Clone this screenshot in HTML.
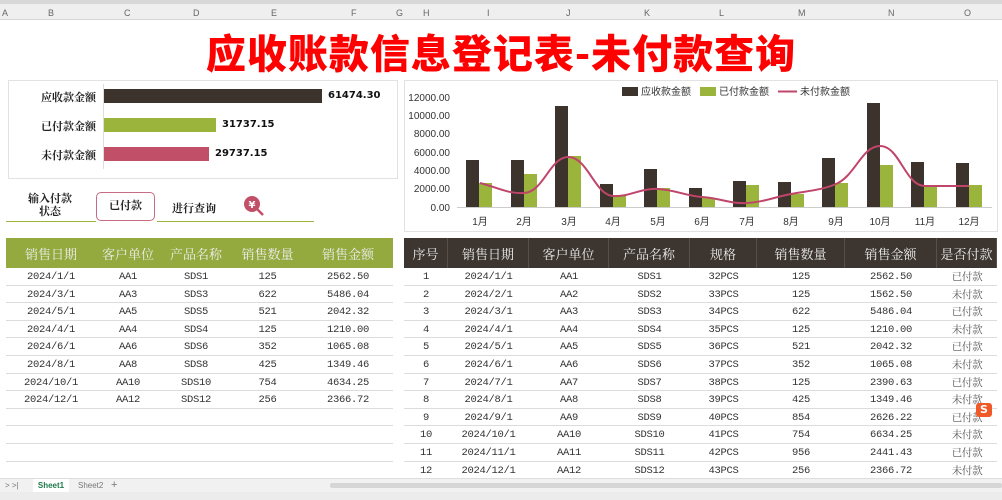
<!DOCTYPE html>
<html><head><meta charset="utf-8"><style>
*{margin:0;padding:0;box-sizing:border-box}
body{width:1002px;height:500px;overflow:hidden;background:#fff;position:relative;font-family:"Liberation Serif","Noto Serif CJK SC",serif;color:#333}
.a{position:absolute}
.colhdr{left:0;top:0;width:1002px;height:20px;background:#efefef;border-top:4px solid #d8d8d8;border-bottom:1px solid #d6d6d6;font:9px "Liberation Sans",sans-serif;color:#666}
.colhdr span{position:absolute;top:4px}
.title{left:0;width:1002px;top:26px;text-align:center;font:900 40px "Noto Sans CJK SC",sans-serif;color:#f00;letter-spacing:1px;line-height:50px}
.box{border:1px solid #e2e2e2;background:#fff}
.lbl{font-size:11px;color:#222;width:90px;text-align:right;left:6px;font-weight:bold}
.val{font:bold 10px "DejaVu Sans",sans-serif;color:#111}
table{border-collapse:separate;border-spacing:0;position:absolute;font-size:11px}
th{color:#eee;font-weight:normal;font-size:13px;height:30px;text-align:center}
td{height:17.6px;line-height:12px;padding:3px 0 0;vertical-align:top;text-align:center;border-bottom:1px solid #dcdcdc;color:#333;font-family:"Liberation Mono","Noto Serif CJK SC",monospace;font-size:10.5px;letter-spacing:-0.3px}
.L th{background:#94aa3e}
.R th{background:#3d3630;border-right:1px solid #55504a}
.R td.c{font-family:"Noto Serif CJK SC",serif;color:#555}
</style></head><body>
<div class="a colhdr">
<span style="left:2px">A</span><span style="left:48px">B</span><span style="left:124px">C</span><span style="left:193px">D</span><span style="left:271px">E</span><span style="left:351px">F</span><span style="left:396px">G</span><span style="left:423px">H</span><span style="left:487px">I</span><span style="left:566px">J</span><span style="left:644px">K</span><span style="left:719px">L</span><span style="left:798px">M</span><span style="left:888px">N</span><span style="left:964px">O</span>
</div>
<div class="a title">应收账款信息登记表-未付款查询</div>

<div class="a box" style="left:8px;top:80px;width:390px;height:99px"></div>
<div class="a" style="left:103px;top:84px;width:1px;height:85px;background:#ddd"></div>
<div class="a lbl" style="top:89px">应收款金额</div>
<div class="a lbl" style="top:118px">已付款金额</div>
<div class="a lbl" style="top:147px">未付款金额</div>
<div class="a" style="left:104px;top:89px;width:218px;height:14px;background:#3b332c"></div>
<div class="a" style="left:104px;top:118px;width:112px;height:14px;background:#9bb53c"></div>
<div class="a" style="left:104px;top:147px;width:105px;height:14px;background:#c24f68"></div>
<div class="a val" style="left:328px;top:90px">61474.30</div>
<div class="a val" style="left:222px;top:119px">31737.15</div>
<div class="a val" style="left:215px;top:148px">29737.15</div>

<div class="a" style="left:20px;top:193px;width:60px;text-align:center;font-size:11px;font-weight:bold;line-height:13px;color:#222">输入付款<br>状态</div>
<div class="a" style="left:96px;top:192px;width:59px;height:29px;border:1px solid #c86b84;border-radius:5px;background:#fff;text-align:center;line-height:27px;font-size:11px;font-weight:bold;color:#222">已付款</div>
<div class="a" style="left:172px;top:200px;font-size:11px;font-weight:bold;color:#222">进行查询</div>
<svg class="a" style="left:242px;top:194px" width="24" height="24"><line x1="13" y1="13" x2="21" y2="21" stroke="#c24f68" stroke-width="2.5"/><circle cx="10" cy="10" r="8" fill="#c24f68"/><text x="10" y="14" font-size="10" fill="#fff" text-anchor="middle" font-family="DejaVu Sans" font-weight="bold">¥</text></svg>
<div class="a" style="left:6px;top:221px;width:90px;height:1px;background:#9bb53c"></div>
<div class="a" style="left:157px;top:221px;width:157px;height:1px;background:#9bb53c"></div>

<div class="a box" style="left:404px;top:80px;width:594px;height:152px"></div>
<svg class="a" style="left:0;top:0" width="1002" height="240" font-family="Liberation Sans,sans-serif">
<g font-size="10" fill="#333" text-anchor="end">
<text x="450" y="101">12000.00</text><text x="450" y="119">10000.00</text><text x="450" y="137">8000.00</text><text x="450" y="156">6000.00</text><text x="450" y="174">4000.00</text><text x="450" y="192">2000.00</text><text x="450" y="211">0.00</text>
</g>
<line x1="457" y1="207.5" x2="992" y2="207.5" stroke="#ccc"/>
<g fill="#3b332c">
<rect x="466" y="160" width="13" height="47"/><rect x="511" y="160" width="13" height="47"/><rect x="555" y="106" width="13" height="101"/><rect x="600" y="184" width="13" height="23"/><rect x="644" y="169" width="13" height="38"/><rect x="689" y="188" width="13" height="19"/><rect x="733" y="181" width="13" height="26"/><rect x="778" y="182" width="13" height="25"/><rect x="822" y="158" width="13" height="49"/><rect x="867" y="103" width="13" height="104"/><rect x="911" y="162" width="13" height="45"/><rect x="956" y="163" width="13" height="44"/>
</g>
<g fill="#9bb53c">
<rect x="479" y="183" width="13" height="24"/><rect x="524" y="174" width="13" height="33"/><rect x="568" y="156" width="13" height="51"/><rect x="613" y="195" width="13" height="12"/><rect x="657" y="188" width="13" height="19"/><rect x="702" y="198" width="13" height="9"/><rect x="746" y="185" width="13" height="22"/><rect x="791" y="194" width="13" height="13"/><rect x="835" y="183" width="13" height="24"/><rect x="880" y="165" width="13" height="42"/><rect x="924" y="185" width="13" height="22"/><rect x="969" y="185" width="13" height="22"/>
</g>
<path d="M480 183 C496 187 508 194 524 193 C544 192 550 156 569 157 C588 158 595 195 613 196 C630 197 640 188 658 189 C676 190 686 196 702 197 C720 198 730 204 747 203 C764 202 775 197 791 194 C808 191 822 190 836 184 C855 176 862 146 880 146 C900 146 905 186 925 186 L969 186" fill="none" stroke="#c0456a" stroke-width="2"/>
<g font-size="10" fill="#333" text-anchor="middle">
<text x="480" y="225">1月</text><text x="524" y="225">2月</text><text x="569" y="225">3月</text><text x="613" y="225">4月</text><text x="658" y="225">5月</text><text x="702" y="225">6月</text><text x="747" y="225">7月</text><text x="791" y="225">8月</text><text x="836" y="225">9月</text><text x="880" y="225">10月</text><text x="925" y="225">11月</text><text x="969" y="225">12月</text>
</g>
<rect x="622" y="87" width="16" height="9" fill="#3b332c"/><text x="641" y="95" font-size="10" fill="#333">应收款金额</text>
<rect x="700" y="87" width="16" height="9" fill="#9bb53c"/><text x="719" y="95" font-size="10" fill="#333">已付款金额</text>
<line x1="778" y1="91.5" x2="797" y2="91.5" stroke="#c0456a" stroke-width="2"/><text x="800" y="95" font-size="10" fill="#333">未付款金额</text>
</svg>

<table class="L" style="left:6px;top:238px;width:387px">
<tr><th style="width:90px">销售日期</th><th style="width:64px">客户单位</th><th style="width:72px">产品名称</th><th style="width:71px">销售数量</th><th>销售金额</th></tr>
<tr><td>2024/1/1</td><td>AA1</td><td>SDS1</td><td>125</td><td>2562.50</td></tr>
<tr><td>2024/3/1</td><td>AA3</td><td>SDS3</td><td>622</td><td>5486.04</td></tr>
<tr><td>2024/5/1</td><td>AA5</td><td>SDS5</td><td>521</td><td>2042.32</td></tr>
<tr><td>2024/4/1</td><td>AA4</td><td>SDS4</td><td>125</td><td>1210.00</td></tr>
<tr><td>2024/6/1</td><td>AA6</td><td>SDS6</td><td>352</td><td>1065.08</td></tr>
<tr><td>2024/8/1</td><td>AA8</td><td>SDS8</td><td>425</td><td>1349.46</td></tr>
<tr><td>2024/10/1</td><td>AA10</td><td>SDS10</td><td>754</td><td>4634.25</td></tr>
<tr><td>2024/12/1</td><td>AA12</td><td>SDS12</td><td>256</td><td>2366.72</td></tr>
<tr><td></td><td></td><td></td><td></td><td></td></tr>
<tr><td></td><td></td><td></td><td></td><td></td></tr>
<tr><td></td><td></td><td></td><td></td><td></td></tr>
<tr><td></td><td></td><td></td><td></td><td></td></tr>
</table>

<table class="R" style="left:404px;top:238px;width:593px">
<tr><th style="width:44px">序号</th><th style="width:81px">销售日期</th><th style="width:80px">客户单位</th><th style="width:81px">产品名称</th><th style="width:67px">规格</th><th style="width:88px">销售数量</th><th style="width:92px">销售金额</th><th>是否付款</th></tr>
<tr><td>1</td><td>2024/1/1</td><td>AA1</td><td>SDS1</td><td>32PCS</td><td>125</td><td>2562.50</td><td class="c">已付款</td></tr>
<tr><td>2</td><td>2024/2/1</td><td>AA2</td><td>SDS2</td><td>33PCS</td><td>125</td><td>1562.50</td><td class="c">未付款</td></tr>
<tr><td>3</td><td>2024/3/1</td><td>AA3</td><td>SDS3</td><td>34PCS</td><td>622</td><td>5486.04</td><td class="c">已付款</td></tr>
<tr><td>4</td><td>2024/4/1</td><td>AA4</td><td>SDS4</td><td>35PCS</td><td>125</td><td>1210.00</td><td class="c">未付款</td></tr>
<tr><td>5</td><td>2024/5/1</td><td>AA5</td><td>SDS5</td><td>36PCS</td><td>521</td><td>2042.32</td><td class="c">已付款</td></tr>
<tr><td>6</td><td>2024/6/1</td><td>AA6</td><td>SDS6</td><td>37PCS</td><td>352</td><td>1065.08</td><td class="c">未付款</td></tr>
<tr><td>7</td><td>2024/7/1</td><td>AA7</td><td>SDS7</td><td>38PCS</td><td>125</td><td>2390.63</td><td class="c">已付款</td></tr>
<tr><td>8</td><td>2024/8/1</td><td>AA8</td><td>SDS8</td><td>39PCS</td><td>425</td><td>1349.46</td><td class="c">未付款</td></tr>
<tr><td>9</td><td>2024/9/1</td><td>AA9</td><td>SDS9</td><td>40PCS</td><td>854</td><td>2626.22</td><td class="c">已付款</td></tr>
<tr><td>10</td><td>2024/10/1</td><td>AA10</td><td>SDS10</td><td>41PCS</td><td>754</td><td>6634.25</td><td class="c">未付款</td></tr>
<tr><td>11</td><td>2024/11/1</td><td>AA11</td><td>SDS11</td><td>42PCS</td><td>956</td><td>2441.43</td><td class="c">已付款</td></tr>
<tr><td>12</td><td>2024/12/1</td><td>AA12</td><td>SDS12</td><td>43PCS</td><td>256</td><td>2366.72</td><td class="c">未付款</td></tr>
</table>
<div class="a" style="left:976px;top:403px;width:16px;height:14px;background:#f05a28;border-radius:3px;color:#fff;font:bold 11px 'DejaVu Sans';text-align:center;line-height:14px">S</div>

<div class="a" style="left:0;top:478px;width:1002px;height:14px;background:#f1f1f1;border-top:1px solid #ddd;font:8px 'Liberation Sans',sans-serif;color:#777">
<span class="a" style="left:5px;top:2px">&gt; &gt;|</span>
<span class="a" style="left:33px;top:0;width:36px;height:13px;background:#fff;color:#1e7a4a;font-weight:bold;text-align:center;line-height:13px">Sheet1</span>
<span class="a" style="left:78px;top:2px">Sheet2</span><span class="a" style="left:111px;top:0;font-size:11px">+</span>
<div class="a" style="left:330px;top:4px;width:672px;height:5px;background:#d6d6d6;border-radius:2px"></div>
</div>
<div class="a" style="left:0;top:492px;width:1002px;height:8px;background:#ececec"></div>
</body></html>
